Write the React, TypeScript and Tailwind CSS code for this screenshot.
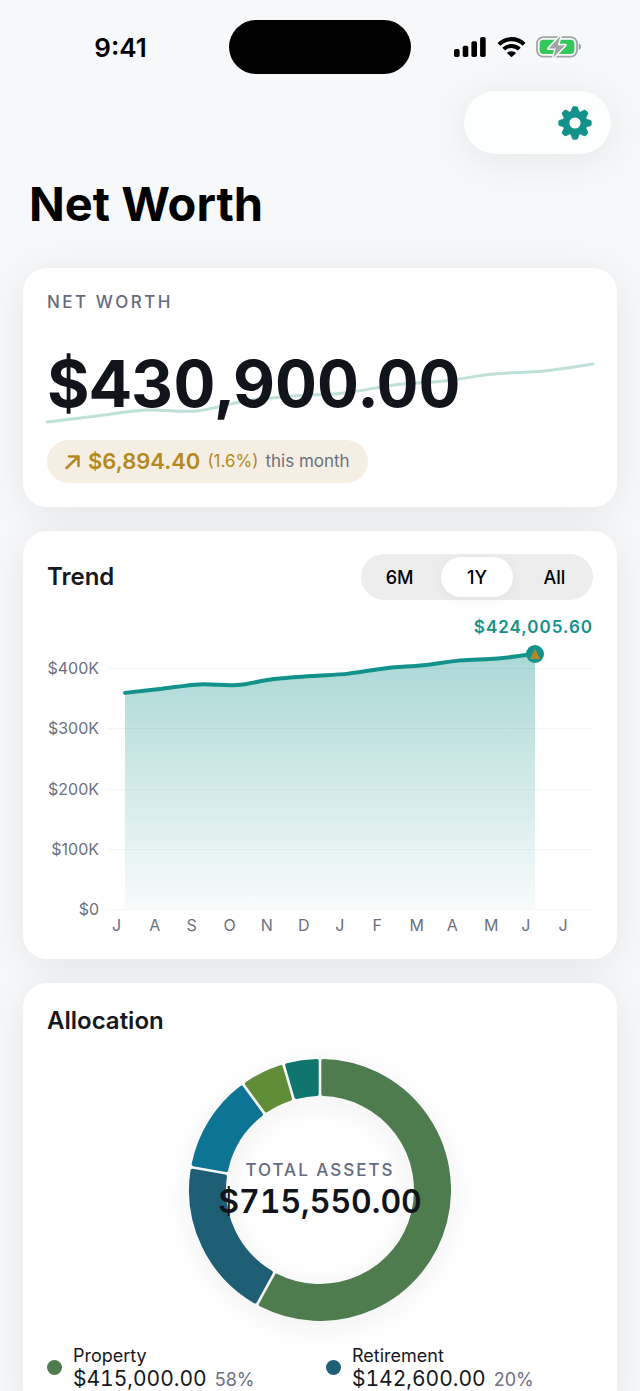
import { useState } from 'react';

type Range = '6M' | '1Y' | 'All';

interface Slice {
  name: string;
  share: number;
  color: string;
}

const RANGES: Range[] = ['6M', '1Y', 'All'];

const MONTHS = ['J', 'A', 'S', 'O', 'N', 'D', 'J', 'F', 'M', 'A', 'M', 'J', 'J'];

const TREND = [359, 366, 373, 372, 382, 387, 391, 400, 405, 413, 416, 424];

const SPARK = [64, 58, 52, 53, 43, 38, 35, 27, 23, 16, 13, 6];

const SLICES: Slice[] = [
  { name: 'Property', share: 58, color: '#4e7c4e' },
  { name: 'Retirement', share: 19.8, color: '#1f5f75' },
  { name: 'Investments', share: 12.2, color: '#0d7593' },
  { name: 'Vehicles', share: 5.5, color: '#618c38' },
  { name: 'Cash', share: 4.5, color: '#0f766e' },
];

const LEGEND = [
  { name: 'Property', amount: '$415,000.00', share: '58%', dot: 'bg-[#4e7c4e]' },
  { name: 'Retirement', amount: '$142,600.00', share: '20%', dot: 'bg-[#1f5f75]' },
];

// Catmull-Rom through the points, written as cubic beziers
function smoothPath(points: number[][]) {
  let d = `M${points[0][0]} ${points[0][1]}`;
  for (let i = 0; i < points.length - 1; i++) {
    const p0 = points[i - 1] ?? points[i];
    const p1 = points[i];
    const p2 = points[i + 1];
    const p3 = points[i + 2] ?? p2;
    d += ` C${p1[0] + (p2[0] - p0[0]) / 6} ${p1[1] + (p2[1] - p0[1]) / 6}`;
    d += ` ${p2[0] - (p3[0] - p1[0]) / 6} ${p2[1] - (p3[1] - p1[1]) / 6}`;
    d += ` ${p2[0]} ${p2[1]}`;
  }
  return d;
}

function polar(r: number, angle: number) {
  return `${131 + r * Math.sin(angle)} ${131 - r * Math.cos(angle)}`;
}

// The slice is inset and gets a stroke of its own colour, which rounds the corners
function slicePath(start: number, end: number) {
  const outer = 129;
  const inner = 96;
  const inset = 3.3;
  const a = Math.asin(inset / outer);
  const b = Math.asin(inset / inner);
  const large = end - start > Math.PI ? 1 : 0;
  return `M${polar(outer, start + a)} A${outer} ${outer} 0 ${large} 1 ${polar(outer, end - a)} L${polar(inner, end - b)} A${inner} ${inner} 0 ${large} 0 ${polar(inner, start + b)} Z`;
}

function StatusBar() {
  return (
    <div className="grid h-[91px] grid-cols-[1fr_182px_1fr] items-start pt-5 text-black">
      <div className="flex h-[54px] items-center justify-center pl-3 text-[26px] font-semibold">9:41</div>
      <div className="h-[54px] rounded-full bg-black" />
      <div className="flex h-[54px] items-center justify-center gap-[10px] pr-4">
        <svg className="h-[22px] w-[34px]" viewBox="0 0 34 22" aria-hidden="true">
          <rect x="1" y="13" width="5.6" height="8" rx="1.7" />
          <rect x="9.7" y="9.7" width="5.6" height="11.3" rx="1.7" />
          <rect x="18.4" y="5.3" width="5.6" height="15.7" rx="1.7" />
          <rect x="27.1" y="1" width="5.6" height="20" rx="1.7" />
        </svg>
        <svg className="h-[22px] w-[29px]" viewBox="0 0 29 22" aria-hidden="true">
          <g fill="none" stroke="currentColor" strokeWidth="4.1">
            <path d="M1.9 8.4 A17.8 17.8 0 0 1 27.1 8.4" />
            <path d="M6.7 13.1 A11.2 11.2 0 0 1 22.3 13.1" />
          </g>
          <path d="M14.5 21.2 L9.9 17 A6.6 6.6 0 0 1 19.1 17 Z" />
        </svg>
        <svg className="h-[24px] w-[46px]" viewBox="0 0 46 24" aria-hidden="true">
          <rect x="1" y="2.1" width="40" height="19.6" rx="6.4" fill="none" stroke="#a1a5a5" strokeWidth="1.8" />
          <path d="M42.7 8.6 C45.9 9.6 45.9 14.2 42.7 15.2 Z" fill="#a1a5a5" />
          <rect x="3.6" y="4.8" width="34.8" height="14.2" rx="4" fill="#34c759" />
          <path
            d="M24.4 1 L12.6 13.6 H19.8 L17.2 22.8 L29.2 10.2 H21.8 Z"
            fill="#a1a5a5"
            stroke="#f7f8fa"
            strokeWidth="3"
            strokeLinejoin="round"
            paintOrder="stroke"
          />
        </svg>
      </div>
    </div>
  );
}

function GearIcon() {
  return (
    <svg className="h-[34px] w-[34px] text-[#12928a]" viewBox="0 0 34 34" fill="currentColor" aria-hidden="true">
      {[0, 45, 90, 135, 180, 225, 270, 315].map((angle) => (
        <path
          key={angle}
          transform={`rotate(${angle} 17 17)`}
          d="M12.4 7 L13.7 2.2 Q14.1 0.3 15.9 0.3 H18.1 Q19.9 0.3 20.3 2.2 L21.6 7 Z"
        />
      ))}
      <circle cx="17" cy="17" r="9" fill="none" stroke="currentColor" strokeWidth="6.8" />
    </svg>
  );
}

function NetWorthCard() {
  const points = SPARK.map((y, i) => [(i * 546) / 11, y]);

  return (
    <section className="rounded-[24px] bg-white p-6 shadow-[0_6px_40px_rgba(0,0,0,0.08)]">
      <p className="text-[17px] leading-5 font-medium tracking-[2.5px] text-[#656a80]">NET WORTH</p>
      <div className="relative mt-8 mb-4">
        <svg
          className="absolute inset-x-0 top-[14px] h-[72px] w-full overflow-visible"
          viewBox="0 0 546 72"
          preserveAspectRatio="none"
          aria-hidden="true"
        >
          <path
            d={smoothPath(points)}
            fill="none"
            stroke="#bfe1da"
            strokeWidth="3"
            strokeLinecap="round"
          />
        </svg>
        <p className="relative text-[65px] leading-[80px] font-bold text-[#11141a] tabular-nums">$430,900.00</p>
      </div>
      <div className="inline-flex h-[43px] items-center gap-[7px] rounded-full bg-[#f4efe2] px-[18px] align-top text-[17px] text-[#b5891f]">
        <svg className="h-4 w-4" viewBox="0 0 16 16" fill="none" stroke="currentColor" strokeWidth="2.5" aria-hidden="true">
          <path d="M1.5 14 L13.5 2.5 M4 2.5 H13.5 V12" strokeLinecap="round" strokeLinejoin="round" />
        </svg>
        <span className="text-[22px] font-semibold">$6,894.40</span>
        <span>(1.6%)</span>
        <span className="text-[#6b7080]">this month</span>
      </div>
    </section>
  );
}

function TrendChart() {
  const points = TREND.map((value, i) => [78 + (i * 410) / 11, 309 - value * 0.602]);
  const line = smoothPath(points);

  return (
    <svg className="block w-full" viewBox="0 0 546 335" role="img" aria-label="Net worth over the last year">
      <defs>
        <linearGradient id="trend-fill" x1="0" y1="0" x2="0" y2="1">
          <stop offset="0" stopColor="#12928a" stopOpacity="0.36" />
          <stop offset="1" stopColor="#12928a" stopOpacity="0.03" />
        </linearGradient>
      </defs>
      {[400, 300, 200, 100, 0].map((value) => {
        const y = 309 - Math.round(value * 0.602);
        return (
          <g key={value}>
            <line x1="60" x2="546" y1={y + 0.5} y2={y + 0.5} stroke="#f4f5f6" />
            <text x="52" y={y + 6} textAnchor="end" fontSize="16" fill="#6b7080">
              {value === 0 ? '$0' : `$${value}K`}
            </text>
          </g>
        );
      })}
      <path d={`${line} V309 H78 Z`} fill="url(#trend-fill)" />
      <path d={line} fill="none" stroke="#12928a" strokeWidth="4" strokeLinecap="round" />
      <circle cx="488" cy="54" r="9" fill="#12928a" />
      <path d="M488 48.5 L493 59 H483 Z" fill="#b08a23" />
      <text
        x="546"
        y="33"
        textAnchor="end"
        fontSize="17"
        fontWeight="600"
        letterSpacing="1"
        fill="#12928a"
      >
        $424,005.60
      </text>
      {MONTHS.map((month, i) => (
        <text key={i} x={65 + i * 37.2} y="331" fontSize="16" fill="#6b7080">
          {month}
        </text>
      ))}
    </svg>
  );
}

function TrendCard() {
  const [range, setRange] = useState<Range>('1Y');

  return (
    <section className="rounded-[24px] bg-white px-6 pt-[23px] pb-6 shadow-[0_6px_40px_rgba(0,0,0,0.08)]">
      <div className="flex items-center justify-between">
        <h2 className="text-[24px] leading-7 font-semibold text-[#16181d]">Trend</h2>
        <div className="grid h-[46px] w-[232px] grid-cols-3 gap-[6px] rounded-full bg-[#ededee] p-[3px]">
          {RANGES.map((item) => (
            <button
              key={item}
              type="button"
              aria-pressed={range === item}
              onClick={() => setRange(item)}
              className={`rounded-full text-[18px] font-medium text-black ${
                range === item ? 'bg-white shadow-[0_2px_12px_rgba(0,0,0,0.05)]' : ''
              }`}
            >
              {item}
            </button>
          ))}
        </div>
      </div>
      <TrendChart />
    </section>
  );
}

function AllocationCard() {
  let turned = 0;

  return (
    <section className="rounded-[24px] bg-white p-6 shadow-[0_6px_40px_rgba(0,0,0,0.08)]">
      <h2 className="text-[24px] leading-7 font-semibold text-[#16181d]">Allocation</h2>
      <div className="mt-6 grid place-items-center">
        <svg
          className="col-start-1 row-start-1 h-[262px] w-[262px] overflow-visible drop-shadow-[0_6px_16px_rgba(0,0,0,0.06)]"
          viewBox="0 0 262 262"
          aria-hidden="true"
        >
          {SLICES.map((slice) => {
            const start = turned;
            turned += (slice.share / 100) * 2 * Math.PI;
            return (
              <path
                key={slice.name}
                d={slicePath(start, turned)}
                fill={slice.color}
                stroke={slice.color}
                strokeWidth="4"
                strokeLinejoin="round"
              />
            );
          })}
        </svg>
        <div className="z-10 col-start-1 row-start-1 text-center">
          <p className="text-[17px] leading-6 font-medium tracking-[2px] text-[#656a80]">TOTAL ASSETS</p>
          <p className="text-[32px] leading-10 font-semibold text-[#11141a] tabular-nums">$715,550.00</p>
        </div>
      </div>
      <ul className="mt-[23px] grid grid-cols-2 gap-3">
        {LEGEND.map((item) => (
          <li key={item.name} className="flex items-center gap-[11px]">
            <span className={`h-[15px] w-[15px] rounded-full ${item.dot}`} />
            <div className="text-[#16181d]">
              <p className="text-[18px] leading-6">{item.name}</p>
              <p className="flex items-baseline gap-2 text-[21px] leading-[22px]">
                <span className="tabular-nums">{item.amount}</span>
                <span className="text-[18px] text-[#6b7080]">{item.share}</span>
              </p>
            </div>
          </li>
        ))}
      </ul>
    </section>
  );
}

export default function App() {
  return (
    <div className="h-screen overflow-hidden bg-[#f7f8fa] font-['Inter',sans-serif]">
      <StatusBar />
      <header>
        <div className="flex justify-end pr-[29px]">
          <button
            type="button"
            aria-label="Settings"
            className="flex h-[63px] w-[147px] items-center justify-end rounded-full bg-[#fdfefe] pr-[19px] shadow-[0_6px_40px_rgba(0,0,0,0.08)]"
          >
            <GearIcon />
          </button>
        </div>
        <h1 className="mt-[22px] mb-9 px-[29px] text-[47px] leading-[56px] font-bold text-black">Net Worth</h1>
      </header>
      <main className="flex flex-col gap-6 px-[23px]">
        <NetWorthCard />
        <TrendCard />
        <AllocationCard />
      </main>
    </div>
  );
}
